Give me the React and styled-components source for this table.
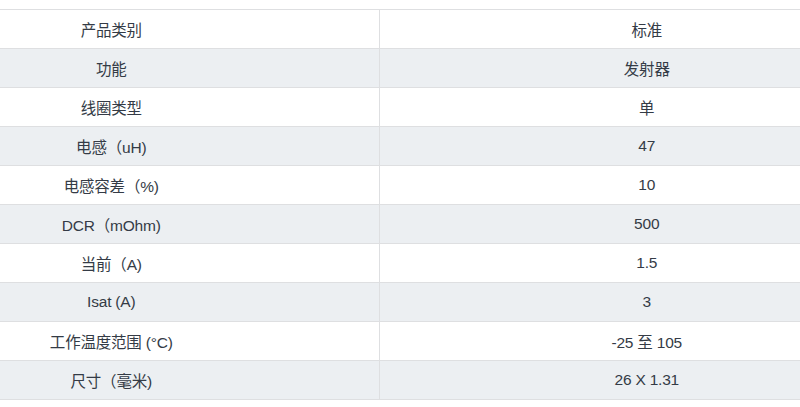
import React from "react";
import styled, { createGlobalStyle } from "styled-components";

const Global = createGlobalStyle`
  html, body { margin: 0; padding: 0; background: #fff; overflow: hidden; }
  body { font-family: "Liberation Sans", "Noto Sans CJK SC", sans-serif; }
`;

const Page = styled.div`
  padding-top: 9px;
  margin-left: -156px;
  width: 1070px;
`;

const Table = styled.table`
  width: 100%;
  border-collapse: collapse;
  table-layout: fixed;
  border-top: 1px solid #dedfe1;
  border-bottom: 1px solid #dedfe1;
`;

const Row = styled.tr`
  background: ${(p) => (p.$alt ? "#eceff2" : "#ffffff")};
  border-bottom: 1px solid #dedfe1;
`;

const Cell = styled.td`
  height: 38px;
  padding: 0;
  text-align: center;
  vertical-align: middle;
  font-family: "Liberation Sans", "Noto Sans CJK SC", sans-serif;
  font-size: 15.5px;
  letter-spacing: -0.2px;
  color: #343b46;
  & + & { border-left: 1px solid #dedfe1; }
`;

const data = [
  ["产品类别", "标准"],
  ["功能", "发射器"],
  ["线圈类型", "单"],
  ["电感（uH)", "47"],
  ["电感容差（%)", "10"],
  ["DCR（mOhm)", "500"],
  ["当前（A)", "1.5"],
  ["Isat (A)", "3"],
  ["工作温度范围 (°C)", "-25 至 105"],
  ["尺寸（毫米)", "26 X 1.31"],
];

export default function App() {
  return (
    <>
      <Global />
      <Page>
        <Table>
          <tbody>
            {data.map(([k, v], i) => (
              <Row key={i} $alt={i % 2 === 1}>
                <Cell>{k}</Cell>
                <Cell>{v}</Cell>
              </Row>
            ))}
          </tbody>
        </Table>
      </Page>
    </>
  );
}
